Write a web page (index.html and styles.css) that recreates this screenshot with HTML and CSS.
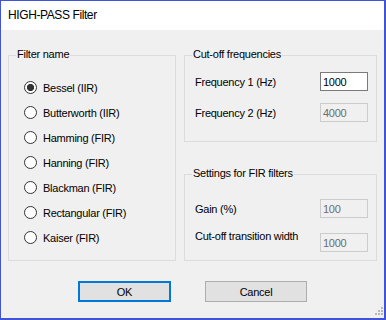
FILE: index.html
```html
<!DOCTYPE html>
<html lang="en">
<head>
  <meta charset="UTF-8" />
  <meta name="viewport" content="width=device-width, initial-scale=1.0" />
  <title>HIGH-PASS Filter</title>
  <link rel="stylesheet" href="styles.css">
</head>
<body>
  <div class="window">
    <div class="title-bar">HIGH-PASS Filter</div>

    <div class="dialog">
      <div class="groups">
        <fieldset class="group group-filters">
          <legend>Filter name</legend>
          <div class="radio-list">
            <label class="radio-row"><input type="radio" name="filter" checked><span>Bessel (IIR)</span></label>
            <label class="radio-row"><input type="radio" name="filter"><span>Butterworth (IIR)</span></label>
            <label class="radio-row"><input type="radio" name="filter"><span>Hamming (FIR)</span></label>
            <label class="radio-row"><input type="radio" name="filter"><span>Hanning (FIR)</span></label>
            <label class="radio-row"><input type="radio" name="filter"><span>Blackman (FIR)</span></label>
            <label class="radio-row"><input type="radio" name="filter"><span>Rectangular (FIR)</span></label>
            <label class="radio-row"><input type="radio" name="filter"><span>Kaiser (FIR)</span></label>
          </div>
        </fieldset>

        <div class="right-col">
          <fieldset class="group group-freq">
            <legend>Cut-off frequencies</legend>
            <div class="field-list">
              <div class="field-row">
                <label for="freq1">Frequency 1 (Hz)</label>
                <input type="text" id="freq1" value="1000" />
              </div>
              <div class="field-row">
                <label for="freq2">Frequency 2 (Hz)</label>
                <input type="text" id="freq2" value="4000" disabled />
              </div>
            </div>
          </fieldset>

          <fieldset class="group group-fir">
            <legend>Settings for FIR filters</legend>
            <div class="field-list">
              <div class="field-row">
                <label for="gain">Gain (%)</label>
                <input type="text" id="gain" value="100" disabled />
              </div>
              <div class="field-row">
                <label for="width" class="label-up">Cut-off transition width</label>
                <input type="text" id="width" value="1000" disabled />
              </div>
            </div>
          </fieldset>
        </div>
      </div>

      <div class="buttons">
        <button type="button" class="btn btn-ok">OK</button>
        <button type="button" class="btn btn-cancel">Cancel</button>
      </div>
    </div>

    <svg class="grip" width="8" height="8" viewBox="0 0 8 8">
      <rect x="0" y="6" width="2" height="2" />
      <rect x="3" y="6" width="2" height="2" />
      <rect x="6" y="6" width="2" height="2" />
      <rect x="3" y="3" width="2" height="2" />
      <rect x="6" y="3" width="2" height="2" />
      <rect x="6" y="0" width="2" height="2" />
    </svg>
  </div>
</body>
</html>
```

FILE: styles.css
```css
body {
  margin: 0;
  font-family: "Liberation Sans", Arial, sans-serif;
  font-size: 11px;
  letter-spacing: -0.25px;
  color: #000;
}

.window {
  position: relative;
  width: 386px;
  height: 320px;
  box-sizing: border-box;
  border: solid #4153d6;
  border-width: 1px 2px 2px 1px;
  background-color: #f0f0f0;
}

.title-bar {
  height: 29px;
  line-height: 29px;
  padding-left: 7px;
  background-color: #fff;
  font-size: 12px;
  letter-spacing: -0.4px;
}

.dialog {
  padding: 18px 0 0 7px;
}

.groups {
  display: flex;
  gap: 8px;
}

.group {
  margin: 0;
  padding: 0;
  min-width: 0;
  box-sizing: border-box;
  border: 1px solid #dcdcdc;
}

.group legend {
  margin-left: 7px;
  padding: 0 1px 1px;
  line-height: 13px;
}

.group-filters {
  width: 168px;
  height: 213px;
}

.radio-list {
  padding: 13px 0 0 15px;
}

.radio-row {
  display: flex;
  align-items: center;
  height: 25px;
}

.radio-row input {
  appearance: none;
  -webkit-appearance: none;
  width: 13px;
  height: 13px;
  margin: 0 6px 0 0;
  box-sizing: border-box;
  border: 1px solid #333;
  border-radius: 50%;
  background-color: #fff;
}

.radio-row input:checked {
  background: radial-gradient(circle, #333 0 3.3px, #fff 3.9px);
}

.right-col {
  display: flex;
  flex-direction: column;
  gap: 25px;
  width: 193px;
}

.group-freq,
.group-fir {
  height: 94px;
}

.field-list {
  display: flex;
  flex-direction: column;
  padding: 0 8px 0 10px;
}

.group-freq .field-list {
  padding-top: 10px;
  gap: 12px;
}

.group-fir .field-list {
  padding-top: 18px;
  gap: 15px;
}

.field-row {
  display: flex;
  justify-content: space-between;
  align-items: center;
  height: 19px;
}

.field-row input {
  width: 48px;
  height: 19px;
  margin: 0;
  padding: 0 0 0 2px;
  box-sizing: border-box;
  border: 1px solid #7a7a7a;
  background-color: #fff;
  font: inherit;
  letter-spacing: inherit;
  color: #000;
  outline: none;
}

.field-row input:disabled {
  background-color: #f0f0f0;
  border-color: #cccccc;
  color: #6d6d6d;
}

.label-up {
  margin-bottom: 13px;
}

.buttons {
  display: flex;
  gap: 34px;
  margin-top: 20px;
  padding-left: 70px;
}

.btn {
  height: 21px;
  padding: 0;
  box-sizing: border-box;
  background-color: #e1e1e1;
  border: 1px solid #adadad;
  font: inherit;
  letter-spacing: inherit;
  color: #000;
}

.btn-ok {
  width: 93px;
  border: 2px solid #0078d7;
}

.btn-cancel {
  width: 102px;
}

.grip {
  position: absolute;
  right: 1px;
  bottom: 3px;
  fill: #b8b8b8;
}
```
